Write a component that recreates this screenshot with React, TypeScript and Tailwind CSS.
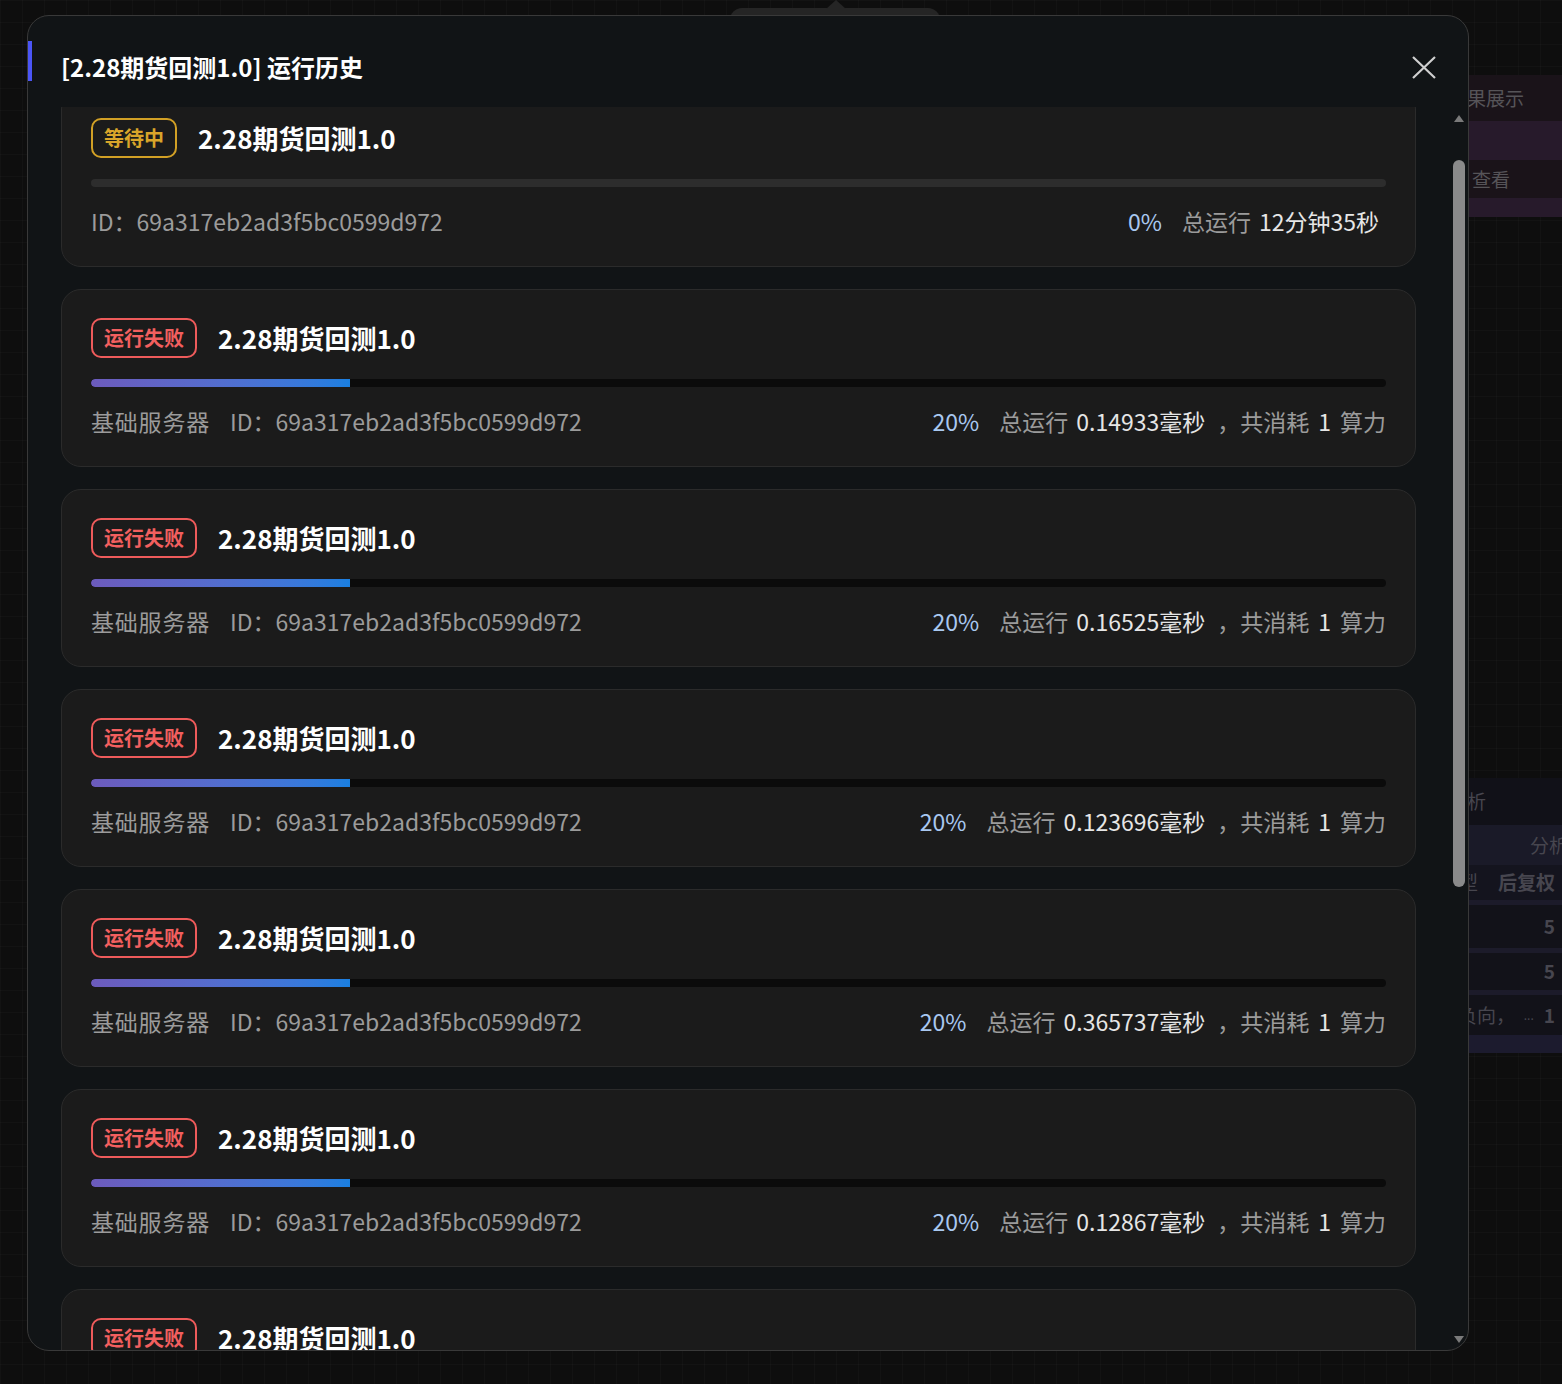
import React from "react";

type Card = {
  status: "wait" | "fail";
  pct: string;
  time: string;
};

const cards: Card[] = [
  { status: "wait", pct: "0%", time: "12分钟35秒" },
  { status: "fail", pct: "20%", time: "0.14933毫秒" },
  { status: "fail", pct: "20%", time: "0.16525毫秒" },
  { status: "fail", pct: "20%", time: "0.123696毫秒" },
  { status: "fail", pct: "20%", time: "0.365737毫秒" },
  { status: "fail", pct: "20%", time: "0.12867毫秒" },
  { status: "fail", pct: "20%", time: "0.11872毫秒" },
];

function RunCard({ c }: { c: Card }) {
  const wait = c.status === "wait";
  return (
    <div className="h-[178px] shrink-0 rounded-[20px] border border-[#2b2b2b] bg-[#1b1b1b] px-[29px] pt-[28px] box-border">
      <div className="flex h-[40px] items-center">
        {wait ? (
          <div className="flex h-[40px] items-center rounded-[10px] border-2 border-[#d2a025] px-[11px] text-[20px] font-bold text-[#d9a52a]">
            等待中
          </div>
        ) : (
          <div className="flex h-[40px] items-center rounded-[10px] border-2 border-[#ee5b5b] px-[11px] text-[20px] font-bold text-[#f25f5f]">
            运行失败
          </div>
        )}
        <div className="ml-[21px] text-[26px] font-bold leading-[40px] text-white">2.28期货回测1.0</div>
      </div>
      <div className={`mt-[21px] h-[8px] overflow-hidden rounded-full ${wait ? "bg-[#2d2d2d]" : "bg-[#0b0b0b]"}`}>
        {!wait && <div className="h-full w-[20%] rounded-l-full bg-gradient-to-r from-[#6c5bbd] to-[#197fe1]" />}
      </div>
      <div className="mt-[19px] flex h-[30px] items-center justify-between text-[23px] leading-[30px] text-[#9b9b9b]">
        <div className="flex items-center">
          {!wait && <span className="mr-[20px] tracking-[0.8px]">基础服务器</span>}
          <span>ID：69a317eb2ad3f5bc0599d972</span>
        </div>
        <div className={`flex items-center ${wait ? "pr-[7px]" : ""}`}>
          <span className="mr-[20px] text-[#a9c8f0]">{c.pct}</span>
          <span>总运行</span>
          <span className="ml-[8px] text-[#e6e6e6]">{c.time}</span>
          {!wait && (
            <>
              <span className="ml-[12px]">，共消耗</span>
              <span className="ml-[9px] text-[#e6e6e6]">1</span>
              <span className="ml-[9px]">算力</span>
            </>
          )}
        </div>
      </div>
    </div>
  );
}

export default function App() {
  return (
    <div className="relative h-[1384px] w-[1562px] overflow-hidden bg-[#0e0e0e] bg-[image:linear-gradient(rgba(255,255,255,0.018)_1px,transparent_1px),linear-gradient(90deg,rgba(255,255,255,0.018)_1px,transparent_1px)] bg-[size:22px_22px] font-['Noto_Sans_CJK_SC','Noto_Sans',sans-serif]">
      {/* background page */}
      <div className="ml-[1300px] flex w-[262px] flex-col pt-[75px] text-[19px] text-[#565458]">
        <div className="flex h-[46px] items-center bg-[#1a1319] pl-[148px]">结果展示</div>
        <div className="h-[39px] bg-[#271a2b]" />
        <div className="flex h-[38px] items-center bg-[#1a1319] pl-[172px]">查看</div>
        <div className="h-[19px] bg-[#271a2b]" />
        <div className="mt-[561px] flex flex-col text-[#47464f]">
          <div className="flex h-[47px] items-center bg-[#111118] pl-[148px]">分析</div>
          <div className="flex h-[40px] items-center justify-end bg-[#1a1a28] pr-0">
            <span className="mr-[-6px]">分析</span>
          </div>
          <div className="flex h-[35px] items-center justify-between bg-[#14141e] pl-[140px] pr-[7px] font-bold">
            <span className="font-normal">类型</span>
            <span>后复权</span>
          </div>
          <div className="h-[5px] bg-[#1c1b2a]" />
          <div className="flex h-[43px] items-center justify-end bg-[#121219] pr-[7px] font-bold">5</div>
          <div className="h-[5px] bg-[#1c1b2a]" />
          <div className="flex h-[37px] items-center justify-end bg-[#121219] pr-[7px] font-bold">5</div>
          <div className="h-[5px] bg-[#1c1b2a]" />
          <div className="flex h-[40px] items-center justify-between bg-[#121219] pl-[158px] pr-[7px]">
            <span>负向，</span>
            <span className="flex items-center gap-[10px]">
              <span className="text-[12px]">...</span>
              <span className="font-bold">1</span>
            </span>
          </div>
          <div className="h-[18px] bg-[#1c1b2e]" />
        </div>
      </div>

      {/* popover behind modal */}
      <div className="absolute left-[730px] top-[8px] h-[20px] w-[210px] rounded-t-[12px] bg-[#252525]" />
      <div className="absolute left-[826px] top-0 h-0 w-0 border-x-[10px] border-b-[9px] border-x-transparent border-b-[#252525]" />

      {/* modal */}
      <div className="absolute left-[27px] top-[15px] flex h-[1336px] w-[1442px] flex-col overflow-hidden rounded-[22px] border border-[#393939] bg-[#111416]">
        <div className="flex h-[91px] shrink-0 items-start pt-[25px]">
          <div className="h-[40px] w-[4px] bg-[#4b55f6]" />
          <div className="ml-[29px] mt-[10px] text-[24px] font-bold leading-[32px] text-white">[2.28期货回测1.0] 运行历史</div>
          <svg className="ml-auto mr-[32px] mt-[15px]" width="24" height="23" viewBox="0 0 24 23" fill="none">
            <path d="M1 1L23 22M23 1L1 22" stroke="#cfcfcf" strokeWidth="2.2" />
          </svg>
        </div>
        <div className="flex min-h-0 flex-1">
          <div className="min-w-0 flex-1 overflow-hidden pl-[33px] pr-[36px]">
            <div className="-mt-[18px] flex flex-col gap-[22px]">
              {cards.map((c, i) => (
                <RunCard key={i} c={c} />
              ))}
            </div>
          </div>
          <div className="mr-[2px] flex w-[14px] shrink-0 flex-col items-center pb-[7px] pt-[8px]">
            <div className="h-0 w-0 border-x-[5px] border-b-[7px] border-x-transparent border-b-[#7a7a7a]" />
            <div className="mt-[38px] h-[727px] w-[12px] rounded-full bg-[#8a8a8a]" />
            <div className="flex-1" />
            <div className="h-0 w-0 border-x-[5px] border-t-[7px] border-x-transparent border-t-[#7a7a7a]" />
          </div>
        </div>
      </div>
    </div>
  );
}
